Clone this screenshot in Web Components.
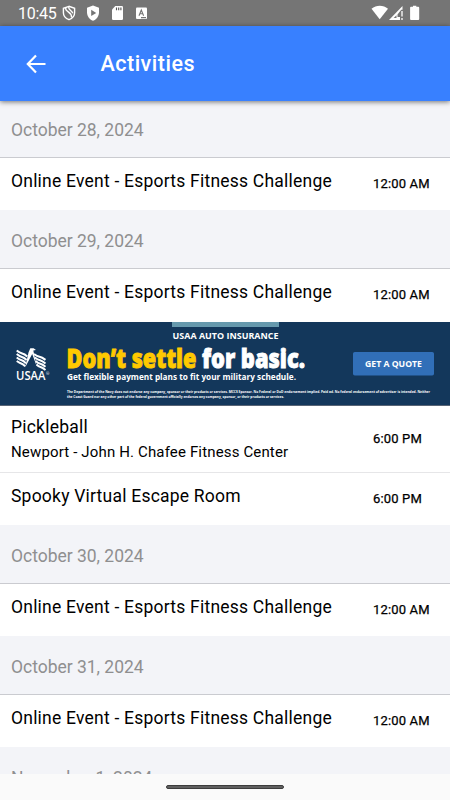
<!DOCTYPE html>
<html lang="en"><head><meta charset="utf-8"><title>Activities</title>
<style>body{margin:0;background:#fff;font-family:Roboto,sans-serif}</style></head><body>
<activities-app></activities-app>
<script>
const define=(name,html)=>customElements.define(name,class extends HTMLElement{
 constructor(){super();this.attachShadow({mode:'open'}).innerHTML=html;}
});
define('status-bar',`<style>:host{display:flex;height:26px;box-sizing:border-box;background:#757575;color:#fff;align-items:center;padding:0 30px 0 18px;font-size:16px;flex:none}
.c{width:44px;white-space:nowrap;letter-spacing:-.25px}.r{margin-left:auto}svg{display:block;flex:none}</style>
<span class="c">10:45</span><svg width="88" height="26" viewBox="0 0 88 26">
<g fill="none" stroke="#fff" stroke-width="1.400"><path d="M7 6.300 1.400 8.300v4.500c0 3.200 2.300 5.700 5.600 6.900 3.300-1.200 5.600-3.700 5.600-6.900V8.300z"/><path d="M3.600 7.600c-.6 5 6.200 3.600 6 9.900M6.600 6.600c-.2 3.700 3 3.600 4.200 6.600"/></g>
<path fill="#fff" d="m31 5.400-6 2.300v4.500c0 4 2.400 7.100 6 8.500 3.600-1.400 6-4.500 6-8.500V7.700z"/><path fill="#757575" d="m29.200 9.700 5 3.200-5 3.200z"/>
<path fill="#fff" d="M53.300 6h6.500q1.200 0 1.200 1.200v11.600q0 1.200-1.200 1.200h-8.600q-1.200 0-1.200-1.200V9.500z"/><path d="M54.500 7.500v2.800m2.200-2.800v2.800m2.200-2.800v2.800" stroke="#555" stroke-width="1.100"/>
<rect x="74" y="7.500" width="11" height="11.500" rx="1" fill="#fff"/><path d="m77 15.700 2.300-5.700 2.300 5.700m-3.800-2h3M79 17.600h5" fill="none" stroke="#757575" stroke-width="1.100"/></svg>
<div class="r"><svg width="49" height="26" viewBox="0 0 49 26"><path fill="#fff" d="M.5 8.800C5.300 4.800 12.300 4.800 17 8.800L8.700 19.300z"/><path fill="#fff" fill-rule="evenodd" d="M31.500 6v3.800h-1.300L26.500 14.500V17h2.500v3H18zM25.500 15.300 22.700 18h2.800z"/><path d="M31 11v5.500m0 1.400v2" stroke="#fff" stroke-width="1.300"/><path fill="#fff" d="M40 6.800h2V5.800h3.300v1h2q.9 0 .9.900v11.400q0 .9-.9.900H40q-.9 0-.9-.9V7.700q0-.9.900-.9z"/></svg></div>`);
define('app-header',`<style>:host{display:flex;height:75px;flex:none;align-items:center;background:#3880ff;color:#fff;box-sizing:border-box;padding-left:26px;box-shadow:0 1px 5px #0008;z-index:1}
h1{font:500 21.500px/28px Roboto,sans-serif;margin:0 0 0 54.500px;letter-spacing:.5px}</style>
<svg width="20" height="20" viewBox="0 0 20 20" fill="none" stroke="#fff" stroke-width="2.200"><path d="M10 1.500 1.800 10l8.200 8.500M2 10h17.500"/></svg><h1><slot></slot></h1>`);
define('date-heading',`<style>:host{display:flex;height:58px;box-sizing:border-box;flex:none;padding:17px 11px 0;background:#f3f4f8;border-bottom:1px solid #cacbd0;color:#8f8f90;font-size:17.500px;line-height:28px;letter-spacing:-.02px}</style><slot></slot>`);
define('event-row',`<style>:host{display:flex;height:53px;box-sizing:border-box;flex:none;background:#fff;color:#000;padding:9px 0 0 11px}
.t{width:362px;font-size:17.500px;line-height:28px;letter-spacing:.22px}.m{font-size:13px;line-height:20px;-webkit-text-stroke:.25px #000;padding-top:7px;letter-spacing:.15px;white-space:nowrap}
::slotted([slot=place]){display:block;font-size:15px;line-height:22px;letter-spacing:.15px}:host([place]) .m{padding-top:16px}:host([place]){height:67px;padding-top:7px;border-bottom:1px solid #e6e6e8}</style>
<div class="t"><slot></slot><slot name="place"></slot></div><div class="m"><slot name="time"></slot></div>`);
define('ad-banner',`<style>:host{display:block;height:84px;flex:none;background:#13375b}svg{display:block}text{font-family:"Open Sans",sans-serif;fill:#fff;font-weight:700}</style>
<svg width="450" height="84" viewBox="0 322 450 84"><path fill="#6699ad" d="M172 322h107v5H172z"/>
<text x="172.500" y="338.600" font-size="8.800" textLength="106" lengthAdjust="spacingAndGlyphs">USAA AUTO INSURANCE</text>
<text x="66.500" y="367.500" font-size="26" textLength="130" lengthAdjust="spacingAndGlyphs" style="fill:#ffc900;stroke:#ffc900;stroke-width:.9;font-weight:800">Don’t settle</text>
<text x="202" y="367.500" font-size="26" textLength="103" lengthAdjust="spacingAndGlyphs" style="stroke:#fff;stroke-width:.9;font-weight:800">for basic.</text>
<text x="67" y="379.800" font-size="9.200" textLength="229" lengthAdjust="spacingAndGlyphs">Get flexible payment plans to fit your military schedule.</text>
<text x="67" y="392.700" font-size="3.800" textLength="363" lengthAdjust="spacingAndGlyphs">The Department of the Navy does not endorse any company, sponsor or their products or services. MCCS Sponsor. No Federal or DoD endorsement implied. Paid ad. No federal endorsement of advertiser is intended. Neither</text>
<text x="67" y="397.500" font-size="3.800" textLength="217" lengthAdjust="spacingAndGlyphs">the Coast Guard nor any other part of the federal government officially endorses any company, sponsor, or their products or services.</text>
<rect x="353" y="352" width="81" height="23.500" rx="1.800" fill="#316fb8"/><text x="365" y="367.200" font-size="8.200" textLength="57" lengthAdjust="spacingAndGlyphs">GET A QUOTE</text>
<text x="16" y="380.300" font-size="12.600" textLength="29.500" lengthAdjust="spacingAndGlyphs" style="font-weight:600">USAA</text><text x="46" y="375" font-size="4" style="font-weight:400">®</text>
<g fill="none" stroke="#fff" stroke-width="2"><path d="M16.700 350.500q3 2.500 5.500 3t5 3M16.700 354q3 2.500 5.200 3t4.700 3M16.700 357.500q3 2.300 5 2.800t4.200 3M16.700 361q3 2 4.500 2.500t4 2.800"/><path d="M34 354q3 2.200 5.500 2.700t6 3.200M34.800 357.500q3 2.200 5.200 2.700t5.500 3.200M35.600 361q2.500 2.200 4.700 2.700t5.200 3M36.500 364.500q2 2 4 2.500t5 3"/></g><path fill="#fff" d="m25.200 367.300 3.300-14.800 1.800-4.300h3.300l2.400 1.700-2.700.5 3.500 16-4.600-12.500z"/>
<path d="M0 405.500h450" stroke="#586475"/></svg>`);
define('nav-bar',`<style>:host{display:flex;height:26px;flex:none;background:#fafafa;align-items:center;justify-content:center}i{width:118px;height:4px;border-radius:2px;background:#606060;box-sizing:border-box;border:1px solid #3d3d3d;}</style><i></i>`);
const ev=(t,time,place='',s='')=>`<event-row ${place?'place':''} style="${s}">${t}${place?`<span slot="place">${place}</span>`:''}<span slot="time">${time}</span></event-row>`;
const o='Online Event - Esports Fitness Challenge';
define('activities-app',`<style>:host{display:flex;flex-direction:column;height:800px;overflow:hidden}main{flex:1;min-height:0;overflow:hidden;display:flex;flex-direction:column;background:#f3f4f8}
status-bar,app-header{position:relative}</style><status-bar></status-bar><app-header>Activities</app-header><main>
<date-heading style="height:57px;padding-top:15px">October 28, 2024</date-heading>${ev(o,'12:00 AM','','height:52px')}
<date-heading style="height:59px">October 29, 2024</date-heading>${ev(o,'12:00 AM')}<ad-banner></ad-banner>
${ev('Pickleball','6:00 PM','Newport - John H. Chafee Fitness Center')}${ev('Spooky Virtual Escape Room','6:00 PM','','height:52px')}
<date-heading style="height:59px">October 30, 2024</date-heading>${ev(o,'12:00 AM','','height:52px')}<date-heading style="height:59px">October 31, 2024</date-heading>${ev(o,'12:00 AM','','height:52px')}
<date-heading>November 1, 2024</date-heading></main><nav-bar></nav-bar>`);
</script></body></html>
